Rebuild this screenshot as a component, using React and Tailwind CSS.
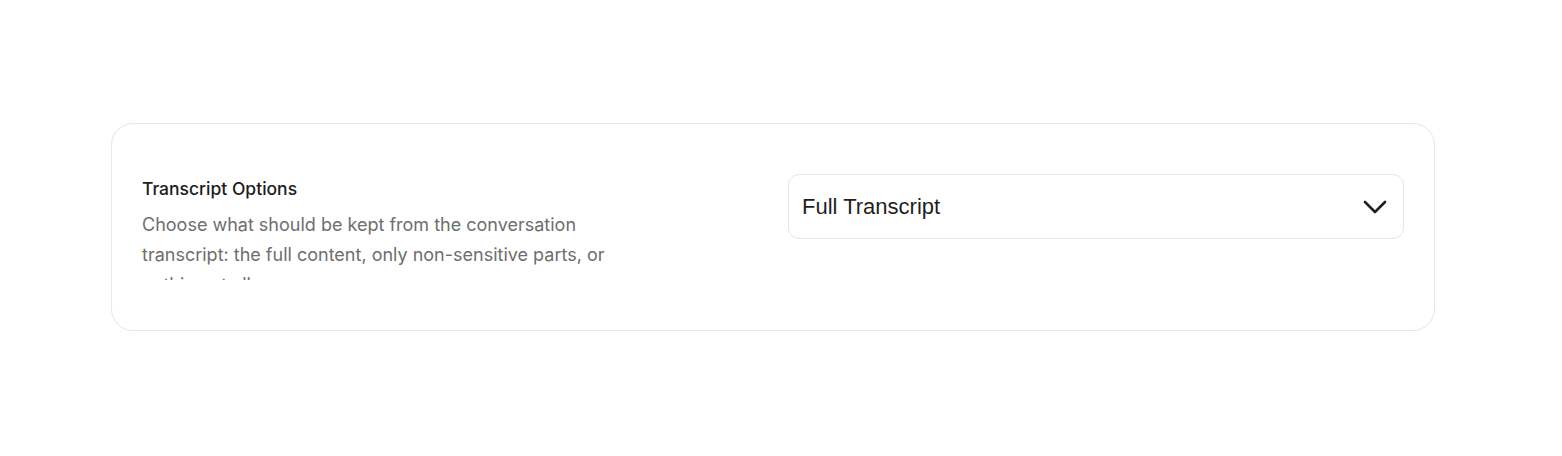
export default function App() {
  return (
    <div
      className="min-h-screen bg-white pt-[123px] pl-[111px]"
      style={{ fontFamily: '"Liberation Sans", Arial, sans-serif' }}
    >
      <div className="w-[1324px] h-[208px] rounded-[22px] border border-[#e6e6e6] bg-white px-[30px] pt-[50px]">
        <div className="grid grid-cols-2 gap-[30px]">
          <div className="pt-[3px]" style={{ fontFamily: 'Inter, "Liberation Sans", sans-serif' }}>
            <div className="text-[17.5px] leading-6 font-medium text-[#1c1c1c]">Transcript Options</div>
            <p className="mt-[9px] max-w-[480px] h-[70px] overflow-hidden text-[18px] leading-[30px] text-[#6e6e6e]">
              Choose what should be kept from the conversation transcript: the full content, only non-sensitive parts, or nothing at all.
            </p>
          </div>
          <button className="flex h-[65px] items-center justify-between rounded-[11px] border border-[#e6e6e6] bg-white pl-[13px] pr-[16px] text-left">
            <span className="text-[22px] text-[#1f1f1f]">Full Transcript</span>
            <svg width="24" height="14" viewBox="0 0 24 14" fill="none">
              <path d="M2 2l10 10L22 2" stroke="#1f1f1f" strokeWidth="2.6" strokeLinecap="round" strokeLinejoin="round" />
            </svg>
          </button>
        </div>
      </div>
    </div>
  );
}
